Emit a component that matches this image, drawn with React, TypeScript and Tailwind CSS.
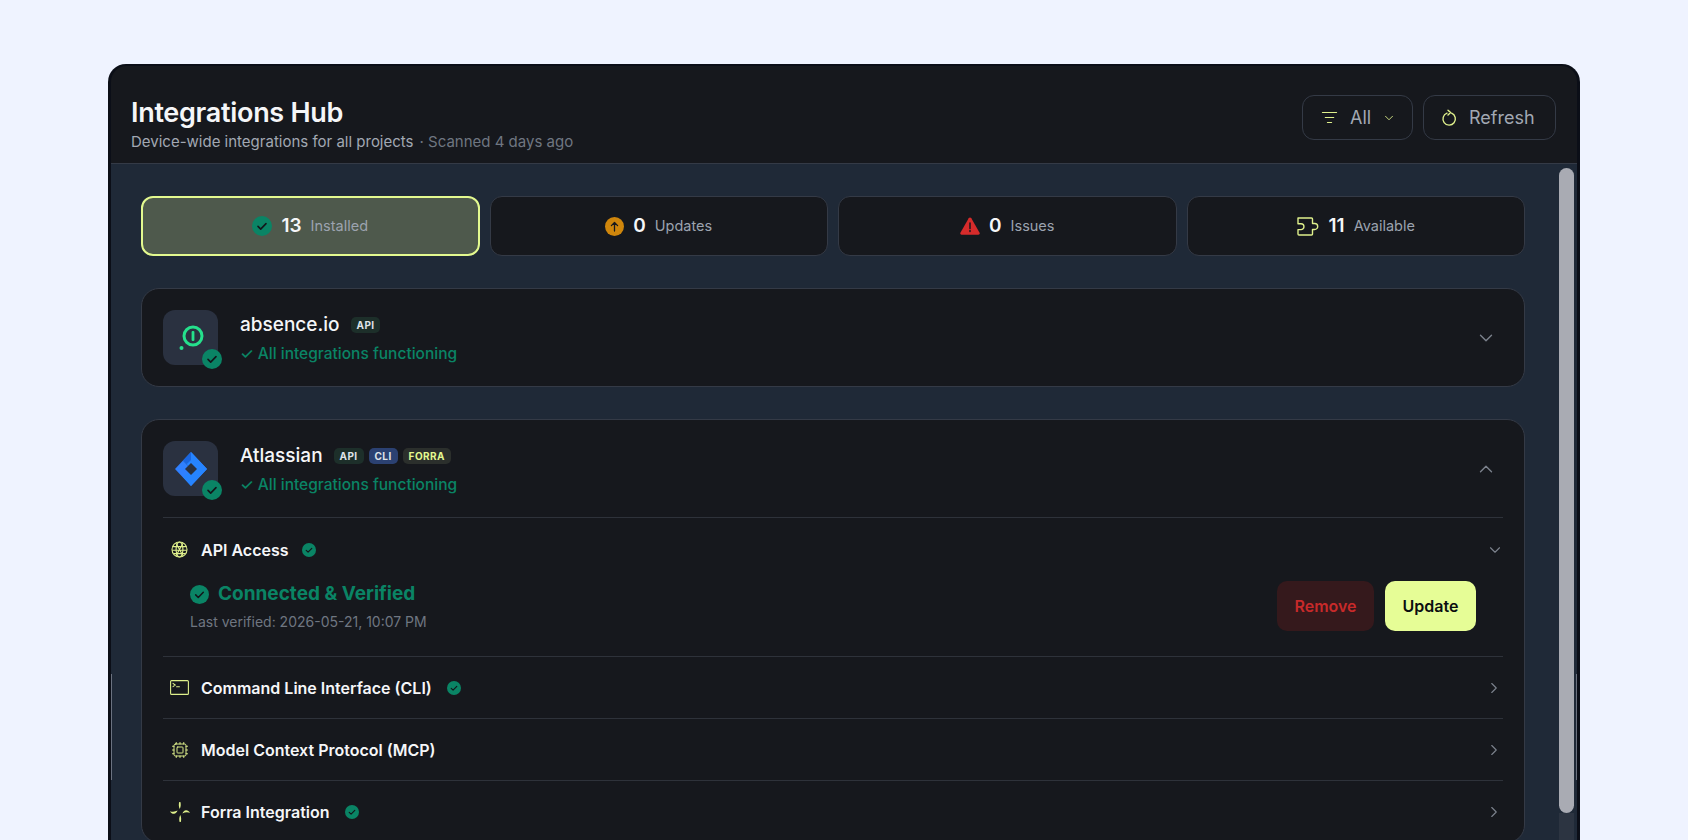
import { ChevronDown, ChevronRight, ChevronUp, Cpu, ListFilter } from "lucide-react";

function CheckDot({ size, className }: { size: number; className?: string }) {
  return (
    <svg width={size} height={size} viewBox="0 0 20 20" className={className}>
      <circle cx="10" cy="10" r="10" fill="#0a8465" />
      <path d="M6 10.4l2.7 2.7L14 7.6" fill="none" stroke="#12161a" strokeWidth="1.6" strokeLinecap="round" strokeLinejoin="round" />
    </svg>
  );
}

function RefreshIcon() {
  return (
    <svg width="18" height="18" viewBox="0 0 18 18" fill="none" stroke="#dff08c" strokeWidth="1.4" strokeLinecap="round" strokeLinejoin="round">
      <path d="M11.6 4.2a6.2 6.2 0 1 1-4.6-.1" />
      <path d="M8 1.2l2.6 2.4L8 6" />
    </svg>
  );
}

function PuzzleIcon() {
  return (
    <svg width="23" height="19" viewBox="0 0 23 19" fill="none" stroke="#dff08c" strokeWidth="1.4" strokeLinejoin="round">
      <path d="M1 1h13.5a1 1 0 0 1 1 1v4.5h2.2a2.9 2.9 0 0 1 0 6h-2.2V17a1 1 0 0 1-1 1H2a1 1 0 0 1-1-1v-4.4h3a2.9 2.9 0 0 0 0-5.9H1z" />
    </svg>
  );
}

function GlobeIcon() {
  return (
    <svg width="17" height="17" viewBox="0 0 17 17" fill="none" stroke="#dff08c" strokeWidth="1.1">
      <circle cx="8.5" cy="8.5" r="7.5" />
      <ellipse cx="8.5" cy="8.5" rx="3.4" ry="7.5" />
      <path d="M1.6 5.6h13.8M1.2 9.2h14.6M3 12.6h11M5 2.2l7 12.6M12 2.2L5 14.8" />
    </svg>
  );
}

function TerminalIcon() {
  return (
    <svg width="19" height="15" viewBox="0 0 19 15" fill="none" stroke="#dff08c" strokeWidth="1.1" strokeLinecap="round">
      <rect x="0.6" y="0.6" width="17.8" height="13.8" rx="1" />
      <path d="M3 3.4l2.2 1.6L3 6.6M6.6 6.8h2.8" />
    </svg>
  );
}

function ForraIcon() {
  return (
    <svg width="20" height="20" viewBox="0 0 20 20" fill="#dff08c">
      <path d="M0 9.2c2.6 1 5.2.6 7.6-.6-.8 2-2 3-3.6 3.2-1.5.1-3-.7-4-2.6zM20 10.8c-2.6-1-5.2-.6-7.6.6.8-2 2-3 3.6-3.2 1.5-.1 3 .7 4 2.6z" />
      <path d="M9.2 0h1.2c.6 2.4.5 4.6-.7 7-1-2.2-1.1-4.6-.5-7zM10.8 20H9.6c-.6-2.4-.5-4.6.7-7 1 2.2 1.1 4.6.5 7z" />
    </svg>
  );
}

function AbsenceLogo() {
  return (
    <svg width="26" height="26" viewBox="0 0 26 26" fill="none">
      <circle cx="15" cy="11" r="9" stroke="#25e08c" strokeWidth="3" />
      <rect x="13.6" y="6" width="2.8" height="10" rx="1" fill="#25e08c" />
      <circle cx="3.5" cy="23" r="2" fill="#25e08c" />
    </svg>
  );
}

function AtlassianLogo() {
  return (
    <svg width="32" height="34" viewBox="0 0 32 34">
      <path d="M16 0l16 17-16 17L0 17 8 8.6l8.2 8.4 3-3.2z" fill="#2f80ff" />
      <path d="M16 0l-8 8.6 8.2 8.4-8 8.2L16 34l16-17z" fill="#2684ff" />
      <path d="M16 11l6 6-6 6-6-6z" fill="#2a3140" />
      <path d="M16 0L8 8.6l3.6 3.6L16 8z" fill="#1a66e0" />
    </svg>
  );
}

function ProviderIcon({ children }: { children: React.ReactNode }) {
  return (
    <div className="relative flex h-[55px] w-[55px] shrink-0 items-center justify-center rounded-xl bg-[#2a3140]">
      {children}
      <CheckDot size={20} className="absolute -right-[4px] -bottom-[4px]" />
    </div>
  );
}

function Tag({ label, className }: { label: string; className: string }) {
  return (
    <span className={`flex h-[16px] items-center rounded-[5px] px-[6px] text-[10px] font-bold tracking-[0.4px] ${className}`}>
      {label}
    </span>
  );
}

function ProviderHead({
  name,
  tags,
  logo,
  open,
}: {
  name: string;
  tags: React.ReactNode;
  logo: React.ReactNode;
  open?: boolean;
}) {
  return (
    <div className="flex items-center">
      <ProviderIcon>{logo}</ProviderIcon>
      <div className="ml-[22px] flex flex-col">
        <div className="flex h-[30px] items-center">
          <span className="text-[19px] font-medium text-[#f5f6f8]">{name}</span>
          <div className="ml-[11px] flex gap-[5px]">{tags}</div>
        </div>
        <span className="mt-[3px] text-[15.5px] leading-[22px] font-medium text-[#0a8465]">✓ All integrations functioning</span>
      </div>
      <div className="ml-auto pr-[6px] text-[#7c828d]">
        {open ? <ChevronUp size={22} strokeWidth={1.5} /> : <ChevronDown size={22} strokeWidth={1.5} />}
      </div>
    </div>
  );
}

function Stat({
  icon,
  value,
  label,
  active,
}: {
  icon: React.ReactNode;
  value: number;
  label: string;
  active?: boolean;
}) {
  return (
    <div
      className={`flex h-[60px] items-center justify-center gap-[9px] rounded-xl border ${
        active ? "border-2 border-[#e3f98f] bg-[#4e594c]" : "border-[#343a46] bg-[#16181d]"
      }`}
    >
      {icon}
      <span className="text-[19px] font-semibold text-[#f5f6f8]">{value}</span>
      <span className="text-[14.5px] text-[#9ca3af]">{label}</span>
    </div>
  );
}

function SubRow({ icon, label, ok }: { icon: React.ReactNode; label: string; ok?: boolean }) {
  return (
    <div className="flex h-[62px] items-center border-t border-[#2e323a]">
      <div className="flex w-[38px] justify-center pr-[5px]">{icon}</div>
      <span className="text-[16px] font-semibold text-[#f5f6f8]">{label}</span>
      {ok && <CheckDot size={14} className="ml-[15px]" />}
      <ChevronRight size={18} strokeWidth={1.5} className="ml-auto text-[#7c828d]" />
    </div>
  );
}

export default function App() {
  return (
    <div className="h-[840px] overflow-hidden bg-[#eff3ff] px-[108px] pt-[64px] font-[Inter,sans-serif]">
      <div className="relative flex h-[776px] flex-col overflow-hidden rounded-t-[18px] border-x-[3px] border-t-[2px] border-[#0b0e17] bg-[#16181d]">
        <header className="flex h-[98px] shrink-0 items-start justify-between border-b border-[#343a46] pt-[29px] pr-[21px] pl-[20px]">
          <div className="flex flex-col">
            <h1 className="text-[27px] leading-[36px] font-semibold tracking-[-0.3px] text-[#f5f6f8]">Integrations Hub</h1>
            <p className="mt-[1px] text-[15px] leading-[20px] text-[#a2a8b3]">
              Device-wide integrations for all projects
              <span className="ml-[6px] text-[#6f7681]">· Scanned 4 days ago</span>
            </p>
          </div>
          <div className="flex gap-[10px]">
            <button className="flex h-[45px] w-[111px] items-center rounded-xl border border-[#343a46] pl-[18px] text-[18px] text-[#a2a8b3]">
              <ListFilter size={17} strokeWidth={1.5} className="text-[#dff08c]" />
              <span className="ml-[12px]">All</span>
              <ChevronDown size={14} strokeWidth={1.5} className="ml-[11px] text-[#dff08c]" />
            </button>
            <button className="flex h-[45px] w-[133px] items-center rounded-xl border border-[#343a46] pl-[16px] text-[18px] text-[#a2a8b3]">
              <RefreshIcon />
              <span className="ml-[11px]">Refresh</span>
            </button>
          </div>
        </header>

        <div className="flex min-h-0 flex-1 bg-[#1f2937]">
          <main className="flex-1 pt-[32px] pr-[34px] pl-[30px]">
            <div className="grid grid-cols-4 gap-[10px]">
              <Stat active value={13} label="Installed" icon={<CheckDot size={20} />} />
              <Stat
                value={0}
                label="Updates"
                icon={
                  <svg width="19" height="19" viewBox="0 0 19 19">
                    <circle cx="9.5" cy="9.5" r="9.5" fill="#cf860c" />
                    <path d="M9.5 14V5.6M6.4 8.6l3.1-3.1 3.1 3.1" fill="none" stroke="#16181d" strokeWidth="1.3" strokeLinecap="round" strokeLinejoin="round" />
                  </svg>
                }
              />
              <Stat
                value={0}
                label="Issues"
                icon={
                  <svg width="20" height="18" viewBox="0 0 20 18">
                    <path d="M10 .5c.5 0 1 .3 1.3.8l8.3 14.4c.5.9-.1 2-1.2 2H1.6c-1.1 0-1.7-1.1-1.2-2L8.7 1.3C9 .8 9.5.5 10 .5z" fill="#d62b2b" />
                    <path d="M10 6v5.4M10 13.4v1.2" stroke="#16181d" strokeWidth="1.5" strokeLinecap="round" />
                  </svg>
                }
              />
              <Stat value={11} label="Available" icon={<PuzzleIcon />} />
            </div>

            <section className="mt-[32px] h-[99px] rounded-[18px] border border-[#343a46] bg-[#16181d] px-[21px] pt-[21px]">
              <ProviderHead
                name="absence.io"
                logo={<AbsenceLogo />}
                tags={<Tag label="API" className="bg-[#1d2f2a] text-[#dfe3e8]" />}
              />
            </section>

            <section className="mt-[32px] rounded-[18px] border border-[#343a46] bg-[#16181d] px-[21px] pt-[21px]">
              <ProviderHead
                name="Atlassian"
                open
                logo={<AtlassianLogo />}
                tags={
                  <>
                    <Tag label="API" className="bg-[#1d2f2a] text-[#dfe3e8]" />
                    <Tag label="CLI" className="bg-[#2b4172] text-[#dfe3e8]" />
                    <Tag label="FORRA" className="bg-[#2b2f2c] text-[#e3f98f]" />
                  </>
                }
              />
              <div className="mt-[21px] border-t border-[#2e323a]">
                <div className="flex h-[63px] items-center">
                  <div className="flex w-[38px] justify-center pr-[5px]">
                    <GlobeIcon />
                  </div>
                  <span className="text-[16px] font-semibold text-[#f5f6f8]">API Access</span>
                  <CheckDot size={14} className="ml-[13px]" />
                  <ChevronDown size={18} strokeWidth={1.5} className="mr-[-1px] ml-auto text-[#7c828d]" />
                </div>
                <div className="flex h-[75px] items-start justify-between pr-[27px] pl-[27px]">
                  <div className="flex flex-col">
                    <div className="flex items-center gap-[9px] pt-[1px]">
                      <CheckDot size={19} />
                      <span className="text-[19px] leading-[24px] font-bold text-[#0a8465]">Connected &amp; Verified</span>
                    </div>
                    <span className="mt-[6px] text-[14px] leading-[20px] text-[#6f7681]">Last verified: 2026-05-21, 10:07 PM</span>
                  </div>
                  <div className="flex gap-[11px]">
                    <button className="h-[50px] w-[97px] rounded-[10px] bg-[#35191c] text-[16px] font-semibold text-[#c72a2a]">Remove</button>
                    <button className="h-[50px] w-[91px] rounded-[10px] bg-[#e6fd96] text-[16px] font-semibold text-[#0b0d10]">Update</button>
                  </div>
                </div>
                <SubRow icon={<TerminalIcon />} label="Command Line Interface (CLI)" ok />
                <SubRow icon={<Cpu size={18} strokeWidth={1.3} className="text-[#dff08c]" />} label="Model Context Protocol (MCP)" />
                <SubRow icon={<ForraIcon />} label="Forra Integration" ok />
              </div>
            </section>
          </main>
          <div className="flex w-[15px] shrink-0 flex-col pt-[4px]">
            <div className="h-[645px] rounded-full bg-[#a9abb3]" />
            <div className="flex-1 bg-[#2c3441]" />
          </div>
          <div className="w-[3px] shrink-0" />
        </div>

        <div className="absolute top-[608px] -left-[1px] h-[106px] w-[2px] bg-[#6b7280]" />
        <div className="absolute top-[608px] -right-[1px] h-[106px] w-[2px] bg-[#6b7280]" />
      </div>
    </div>
  );
}
